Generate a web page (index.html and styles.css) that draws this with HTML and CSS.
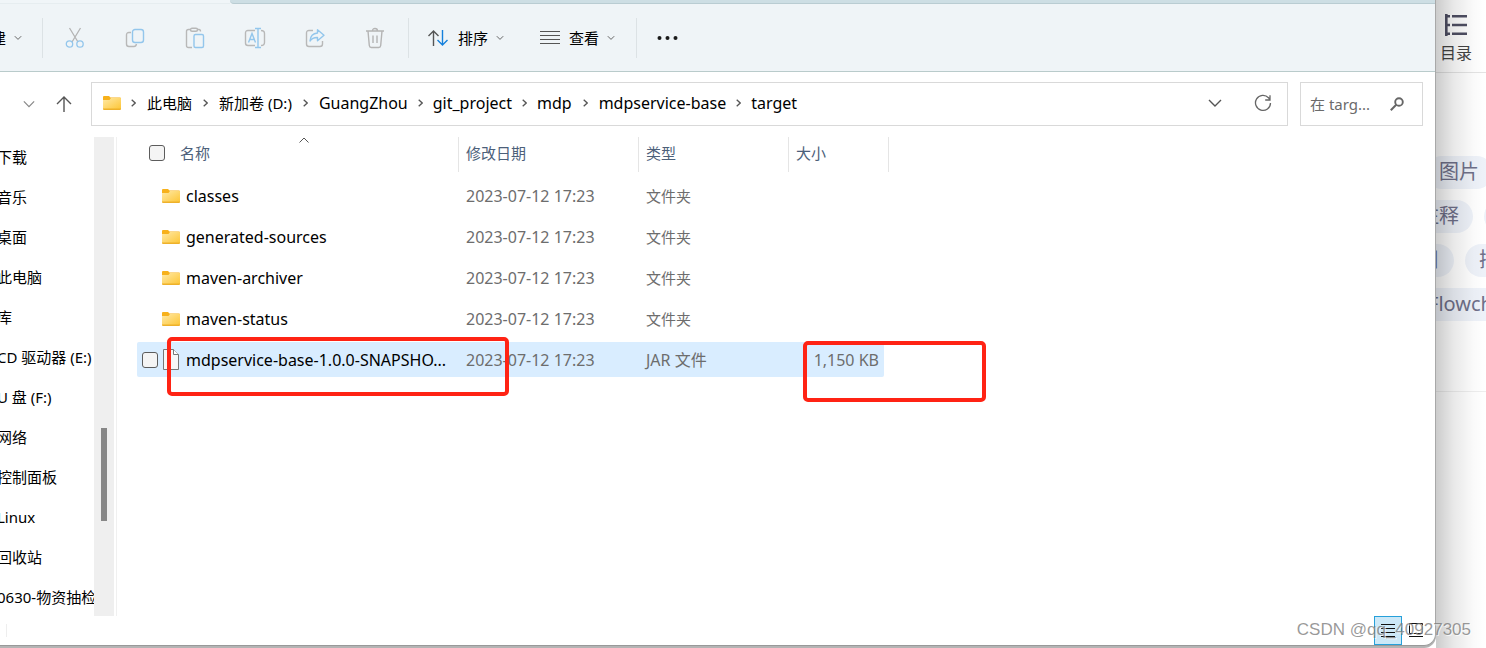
FILE: index.html
```
<!DOCTYPE html>
<html lang="zh-CN">
<head>
<meta charset="utf-8">
<title>target</title>
<link rel="stylesheet" href="styles.css">
</head>
<body>
<svg class="defs" aria-hidden="true">
  <defs>
    <linearGradient id="gold" x1="0" y1="0" x2="1" y2="1">
      <stop offset="0" stop-color="#ffe9a6"/><stop offset="1" stop-color="#fdc637"/>
    </linearGradient>
  </defs>
  <symbol id="folder" viewBox="0 0 18 14">
    <path d="M0 1q0-1 1-1h5l1.500 1.500H17q1 0 1 1V6H0z" fill="#f7b11b"/>
    <path d="M0 4h6.500L8 2h9.500q.5 0 .5.500V13H0z" fill="url(#gold)"/>
    <path d="M0 12.500h18v.5q0 1-1 1H1q-1 0-1-1z" fill="#eeb12a"/>
  </symbol>
  <symbol id="right" viewBox="0 0 5 8"><path d="M.7.700 4.200 4 .7 7.300" fill="none" stroke="#555" stroke-width="1.300"/></symbol>
  <symbol id="down" viewBox="0 0 8 6"><path d="m.8 1.200 3.200 3.200 3.200-3.200" fill="none" stroke="#666" stroke-width="1"/></symbol>
  <symbol id="bigdown" viewBox="0 0 14 8"><path d="m1 1 6 6 6-6" fill="none" stroke="currentColor" stroke-width="1.400"/></symbol>
</svg>

<div class="desktop">
  <div class="window">
    <div class="titlebar"><div class="tab"></div><div class="tabspace"></div></div>

    <div class="toolbar">
      <button class="cmd new">建<svg class="caret"><use href="#down"/></svg></button>
      <span class="divider"></span>
      <div class="tools">
        <button class="tool" aria-label="剪切"><svg width="20" height="22" viewBox="0 0 20 22" fill="none" stroke-width="1.300"><path d="M4.500 1 13 15M15.500 1 7 15" stroke="#b4b4b4"/><circle cx="4.500" cy="17" r="3.200" stroke="#93c6ec"/><circle cx="15" cy="17" r="3.200" stroke="#93c6ec"/></svg></button>
        <button class="tool" aria-label="复制"><svg width="20" height="20" viewBox="0 0 20 20" fill="none" stroke-width="1.400"><path d="M6 4.500H4Q1.500 4.500 1.500 7v9q0 2.500 2.500 2.500h5q2 0 2.500-2.500" stroke="#b8b8b8"/><rect x="7.500" y="1.500" width="11" height="13" rx="2.500" stroke="#93c6ec"/></svg></button>
        <button class="tool" aria-label="粘贴"><svg width="20" height="22" viewBox="0 0 20 22" fill="none" stroke-width="1.400"><path d="M7 20.500H3.500Q1.500 20.500 1.500 18.500v-14q0-2 2-2H6M12 2.500h2q1.500 0 1.500 2" stroke="#b8b8b8"/><rect x="5.500" y="1.200" width="7" height="3" rx="1.500" stroke="#b8b8b8"/><rect x="9" y="7.500" width="9.500" height="13" rx="1.500" stroke="#93c6ec"/></svg></button>
        <button class="tool" aria-label="重命名"><svg width="22" height="22" viewBox="0 0 22 22" fill="none" stroke-width="1.400"><path d="M11 3.500H4Q1.500 3.500 1.500 6v10q0 2.500 2.500 2.500h7M17 3.500q3.500 0 3.500 3v9q0 3-3.500 3" stroke="#b8b8b8"/><path d="M11 1.500h6M11 20.500h6M14 1.500v19M4.500 15.500 8 6.500l3.500 9M5.700 12.500h4.600" stroke="#93c6ec"/></svg></button>
        <button class="tool" aria-label="共享"><svg width="20" height="20" viewBox="0 0 20 20" fill="none" stroke-width="1.400" stroke-linejoin="round"><path d="M8 2.500H4Q1.500 2.500 1.500 5v11q0 2.500 2.500 2.500h11q2.500 0 2.500-2.500v-3" stroke="#b8b8b8"/><path d="M12.500 1.800 19 7.200l-6.500 5.500V9.500Q7.500 9.300 5 13q.5-7.500 7.500-8z" stroke="#93c6ec"/></svg></button>
        <button class="tool" aria-label="删除"><svg width="20" height="22" viewBox="0 0 20 22" fill="none" stroke="#b4b4b4" stroke-width="1.400"><path d="M1 4h18M7.500 4q0-2.500 2.500-2.500T12.500 4M3 4l1.300 14.500q.2 2 2 2h7.400q1.800 0 2-2L17 4M8 8.500v7.500M12 8.500v7.500"/></svg></button>
      </div>
      <span class="divider"></span>
      <button class="cmd sort"><svg width="22" height="18" viewBox="0 0 22 18" fill="none" stroke-width="1.400"><path d="M6.500 17V2M1.500 7l5-5 5 5" stroke="#555"/><path d="M15.500 1v15M10.500 11l5 5 5-5" stroke="#1580dc"/></svg><span class="label">排序</span><svg class="caret"><use href="#down"/></svg></button>
      <button class="cmd view"><svg width="20" height="16" viewBox="0 0 20 16" stroke="#555" stroke-width="1"><path d="M0 1.500h20M0 5.500h20M0 9.500h20M0 13.500h20"/></svg><span class="label">查看</span><svg class="caret"><use href="#down"/></svg></button>
      <span class="divider"></span>
      <button class="cmd more" aria-label="更多"><svg width="22" height="6" viewBox="0 0 22 6" fill="#1a1a1a"><circle cx="2.500" cy="3" r="2"/><circle cx="10.500" cy="3" r="2"/><circle cx="18.500" cy="3" r="2"/></svg></button>
    </div>

    <div class="addressrow">
      <button class="navbtn recent" aria-label="最近"><svg width="12" height="8"><use href="#bigdown"/></svg></button>
      <button class="navbtn up" aria-label="向上"><svg width="16" height="18" viewBox="0 0 16 18" fill="none" stroke="#555" stroke-width="1.400"><path d="M8 17V2M1 9l7-7 7 7"/></svg></button>
      <div class="address">
        <svg class="folder"><use href="#folder"/></svg>
        <nav class="crumbs">
          <svg class="sep"><use href="#right"/></svg><a href="#" class="cn">此电脑</a>
          <svg class="sep"><use href="#right"/></svg><a href="#" class="cn">新加卷 (D:)</a>
          <svg class="sep"><use href="#right"/></svg><a href="#">GuangZhou</a>
          <svg class="sep tight"><use href="#right"/></svg><a href="#">git_project</a>
          <svg class="sep tight"><use href="#right"/></svg><a href="#">mdp</a>
          <svg class="sep"><use href="#right"/></svg><a href="#">mdpservice-base</a>
          <svg class="sep tight"><use href="#right"/></svg><a href="#">target</a>
        </nav>
        <button class="navbtn" aria-label="历史"><svg width="14" height="8"><use href="#bigdown"/></svg></button>
        <button class="navbtn" aria-label="刷新"><svg width="18" height="18" viewBox="0 0 18 18" fill="none" stroke="#666" stroke-width="1.300"><path d="M16.500 9A7.500 7.500 0 1 1 14.500 3.800L16 5.500M16 1.200V6h-4.800"/></svg></button>
      </div>
      <div class="search">
        <input type="text" aria-label="搜索" placeholder="在 targ...">
        <svg width="14" height="14" viewBox="0 0 14 14" fill="none" stroke="#666"><circle cx="9" cy="5" r="3.800" stroke-width="1.900"/><path d="M6.200 7.800.8 13.200" stroke-width="2"/></svg>
      </div>
    </div>

    <div class="main">
      <ul class="tree">
        <li>下载</li><li>音乐</li><li>桌面</li><li>此电脑</li><li>库</li><li>CD 驱动器 (E:)</li>
        <li>U 盘 (F:)</li><li>网络</li><li>控制面板</li><li>Linux</li><li>回收站</li><li>0630-物资抽检</li>
      </ul>
      <div class="scrollbar"><div class="thumb"></div></div>
      <div class="files">
        <table>
          <colgroup><col class="c-name"><col class="c-date"><col class="c-type"><col class="c-size"></colgroup>
          <thead>
            <tr>
              <th><div class="namehead"><input type="checkbox" aria-label="全选">名称</div><svg class="sorted" width="10" height="6" viewBox="0 0 10 6" fill="none" stroke="#555"><path d="m.5 5.500 4.500-4.500 4.500 4.500"/></svg></th>
              <th>修改日期</th><th>类型</th><th>大小</th>
            </tr>
          </thead>
          <tbody>
            <tr><td><div class="name"><svg class="folder"><use href="#folder"/></svg>classes</div></td><td class="date">2023-07-12 17:23</td><td>文件夹</td><td></td></tr>
            <tr><td><div class="name"><svg class="folder"><use href="#folder"/></svg>generated-sources</div></td><td class="date">2023-07-12 17:23</td><td>文件夹</td><td></td></tr>
            <tr><td><div class="name"><svg class="folder"><use href="#folder"/></svg>maven-archiver</div></td><td class="date">2023-07-12 17:23</td><td>文件夹</td><td></td></tr>
            <tr><td><div class="name"><svg class="folder"><use href="#folder"/></svg>maven-status</div></td><td class="date">2023-07-12 17:23</td><td>文件夹</td><td></td></tr>
            <tr class="selected"><td><div class="name"><input type="checkbox" aria-label="选择文件"><svg class="file" width="16" height="21" viewBox="0 0 16 21"><path d="M.5.500h10l5 5v15H.5z" fill="#f7f7f7" stroke="#777"/><path d="M10.500.500v5h5" fill="#fff" stroke="#777"/></svg>mdpservice-base-1.0.0-SNAPSHO...</div></td><td class="date">2023-07-12 17:23</td><td class="date">JAR 文件</td><td class="size">1,150 KB</td></tr>
          </tbody>
        </table>
      </div>
    </div>

    <div class="status">
      <span class="tick"></span>
      <button class="mode on" aria-label="详细信息"><svg width="16" height="15" viewBox="0 0 16 15" stroke="#111"><path d="M1 1.500h14M1 5.500h14M1 9.500h14M1 13.500h14"/></svg></button>
      <button class="mode" aria-label="大图标"><svg width="16" height="15" viewBox="0 0 16 15" fill="none" stroke="#111"><path d="M1.500.500h13v10h-13zM1 13.500h14"/></svg></button>
    </div>
  </div>

  <aside class="page">
    <div class="toc"><svg width="24" height="24" viewBox="0 0 24 24" fill="none" stroke="#4f4f63" stroke-width="2.600"><path d="M2.300 1v22M2 3.300h4M2 12h4M2 20.700h4M8 3.300h15M8 12h15M8 20.700h15"/></svg>目录</div>
    <div class="tags">
      <div class="tagrow r1"><span>图片</span></div>
      <div class="tagrow r2"><span>注释</span><span>脚注</span></div>
      <div class="tagrow r3"><span>项目</span><span>插入</span></div>
      <div class="tagrow r4"><span>Flowchart</span></div>
    </div>
  </aside>
</div>

<div class="mark mark-name"></div>
<div class="mark mark-size"></div>
<div class="watermark">CSDN @qq_40927305</div>
</body>
</html>
```

FILE: styles.css
```
* { box-sizing: border-box; }
body {
  margin: 0;
  position: relative;
  overflow: hidden;
  color: #000;
  font: 15px/20px "Noto Sans", "Noto Sans CJK SC", sans-serif;
}
button { border: 0; padding: 0; background: none; font: inherit; color: inherit; display: flex; align-items: center; }
svg { display: block; flex: none; }
.defs { position: absolute; width: 0; height: 0; }
.desktop { display: flex; height: 100vh; background: #fff; }

.window {
  flex: 1;
  min-width: 0;
  display: flex;
  flex-direction: column;
  background: #fff;
  border-right: 1px solid #a8a8a8;
  border-bottom: 1px solid #999;
  border-radius: 0 0 12px 0;
  margin-bottom: 2px;
  box-shadow: 0 2px 0 #b4b4b4;
}
.titlebar { display: flex; height: 4px; background: #f0f5f8; }
.tab { width: 230px; border-bottom: 1px solid #e6edf0; }
.tabspace { flex: 1; background: #cddee4; border-bottom: 1px solid #b9ccd2; border-radius: 0 0 0 4px; }

.toolbar { display: flex; align-items: center; height: 68px; background: #eff4f7; border-bottom: 1px solid #b9cbcb; }
.divider { width: 1px; height: 40px; background: #dce2e5; }
.cmd { white-space: nowrap; }
.caret { width: 8px; height: 6px; margin-left: 8px; }
.new { width: 42px; margin-left: -9px; margin-right: 9px; }
.tools { display: flex; padding: 0 3px 0 2px; }
.tool { width: 60px; height: 40px; justify-content: center; }
.label { margin-left: 9px; }
.sort { margin-left: 18px; }
.view { margin-left: 36px; margin-right: 21px; }
.more { margin-left: 20px; }

.addressrow { display: flex; align-items: center; height: 65px; padding: 0 12px 2px 0; }
.navbtn { justify-content: center; color: #555; }
.recent { margin-left: 23px; color: #888; }
.up { margin-left: 21px; }
.address { flex: 1; display: flex; align-items: center; gap: 32px; height: 44px; margin-left: 19px; padding: 0 15px 2px 11px; border: 1px solid #d9d9d9; }
.folder { width: 18px; height: 14px; }
.address .folder { margin-right: -22px; }
.crumbs { flex: 1; display: flex; align-items: center; font-size: 16px; }
.crumbs a { color: #000; text-decoration: none; white-space: nowrap; }
.crumbs .cn { font-size: 15px; }
.sep { width: 5px; height: 8px; margin: 0 11px; }
.crumbs .sep:first-child { margin-left: 0; }
.crumbs .tight { margin: 0 10px; }
.search { display: flex; align-items: center; width: 123px; height: 44px; margin-left: 12px; padding: 0 18px 0 9px; border: 1px solid #d9d9d9; }
.search input { flex: 1; min-width: 0; border: 0; padding: 0; font: inherit; background: none; outline: 0; }
.search input::placeholder { color: #6b6b6b; opacity: 1; }

.main { flex: 1; min-height: 0; display: flex; }
.tree { width: 97px; margin: 0 0 0 -3px; padding: 0; list-style: none; overflow: hidden; }
.tree li { height: 40px; line-height: 40px; white-space: nowrap; overflow: hidden; }
.scrollbar { width: 20px; padding: 291px 7px 0 7px; background: #efefef; }
.thumb { height: 93px; background: #878787; }
.files { flex: 1; margin-left: 2px; border-left: 1px solid #f0f0f0; padding-left: 20px; }

table { width: 747px; margin-top: -6px; table-layout: fixed; border-collapse: separate; border-spacing: 0 6px; }
.c-name { width: 322px; }
.c-date { width: 180px; }
.c-type { width: 150px; }
.c-size { width: 95px; }
th { position: relative; height: 35px; padding: 0 7px 4px; text-align: left; font-weight: 400; color: #4c607a; border-right: 1px solid #e5e5e5; }
th:last-child { border-right: 0; }
th:last-child::after { content: ""; position: absolute; top: 0; right: -5px; width: 1px; height: 35px; background: #e5e5e5; }
.namehead { display: flex; align-items: center; gap: 15px; padding-left: 5px; }
.sorted { position: absolute; left: 162px; top: 0; }
input[type="checkbox"] { appearance: none; flex: none; width: 16px; height: 16px; margin: 0; border: 1px solid #5c5c5c; border-radius: 3px; background: #f4f4f4; }
td { height: 35px; padding: 0 7px; color: #6d6d6d; white-space: nowrap; }
td:first-child { padding: 0; font-size: 16px; color: #000; }
.date, .size { font-size: 16px; }
.size { padding-right: 5px; text-align: right; }
.name { display: flex; align-items: center; padding-left: 25px; }
.name .folder { margin-right: 6px; }
.selected td { background: #d9edff; }
.selected td:first-child { border-radius: 2px 0 0 2px; }
.selected td:last-child { border-radius: 0 2px 2px 0; }
.selected .name { padding-left: 5px; }
.file { margin: 0 7px 0 5px; }

.status { display: flex; height: 29px; padding-right: 5px; }
.tick { width: 1px; height: 13px; margin: 8px auto 0 6px; background: #eee; }
.mode { width: 28px; justify-content: center; }
.on { background: #cce8f7; border: 1px solid #26a0da; }

.page { position: relative; width: 50px; overflow: hidden; color: #6f7089; }
.page::after { content: ""; position: absolute; inset: 0; background: linear-gradient(90deg, rgba(0,0,0,.2), rgba(0,0,0,.09) 35%, rgba(0,0,0,.02) 75%, transparent); }
.toc { display: flex; flex-direction: column; gap: 6px; height: 73px; padding: 13px 0 0 4px; font-size: 16px; color: #444; border-bottom: 1px solid #e4e4e4; }
.toc svg { margin-left: 4px; }
.tags { height: 319px; padding-top: 83px; border-bottom: 1px solid #eee; font-size: 20px; }
.tagrow { display: flex; gap: 11px; margin-bottom: 11px; }
.tagrow span { flex: none; height: 33px; line-height: 31px; padding: 0 14px; border-radius: 17px; background: #eef2f9; white-space: nowrap; }
.r1 { margin-left: -11px; }
.r2 { margin-left: -31px; }
.r3 { margin-left: -50px; }
.r4 { margin-left: -22px; }

.mark { position: absolute; border: 4px solid #ff2314; border-radius: 5px; }
.mark-name { left: 167px; top: 337px; width: 342px; height: 59px; }
.mark-size { left: 803px; top: 341px; width: 183px; height: 61px; }
.watermark { position: absolute; right: 15px; bottom: 8px; font: 17px/20px "Liberation Sans", sans-serif; color: rgba(120,120,120,.75); text-shadow: 1px 1px 0 rgba(255,255,255,.7); }
```
